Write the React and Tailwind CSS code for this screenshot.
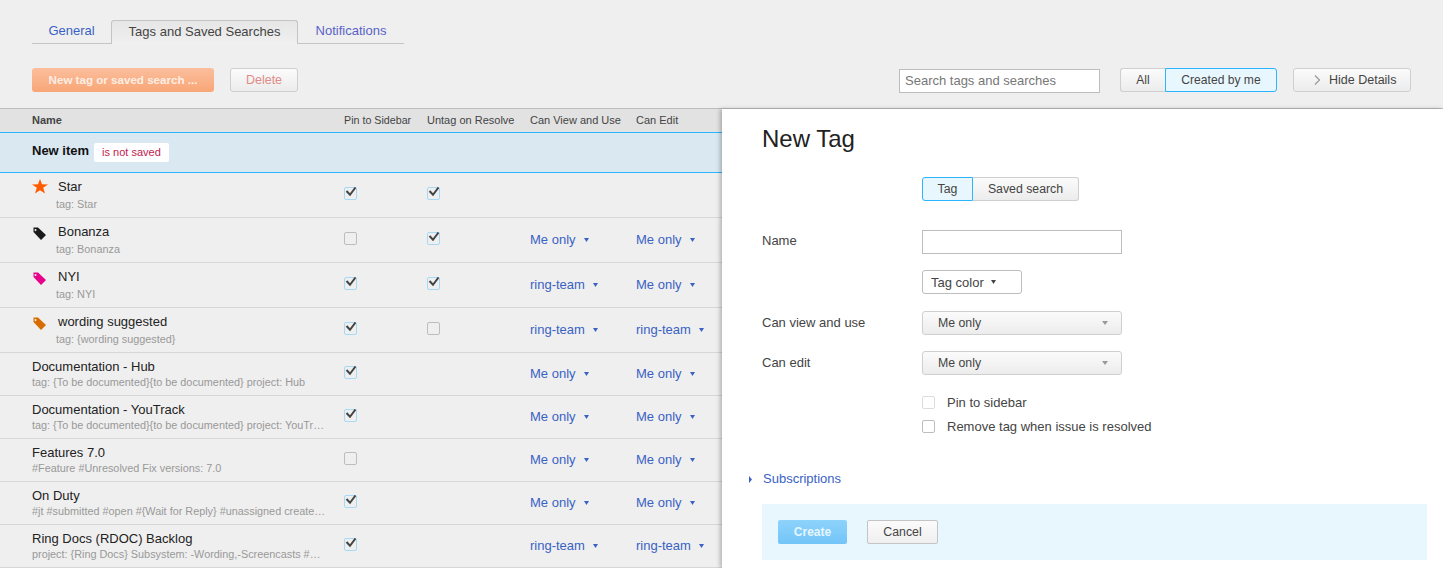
import React from "react";

const rows = [
  { name: "Star", sub: "tag: Star", icon: "star", pin: true, untag: true, tall: true },
  { name: "Bonanza", sub: "tag: Bonanza", icon: "#1a1a1a", pin: false, untag: true, view: "Me only", edit: "Me only", tall: true },
  { name: "NYI", sub: "tag: NYI", icon: "#e6008a", pin: true, untag: true, view: "ring-team", edit: "Me only", tall: true },
  { name: "wording suggested", sub: "tag: {wording suggested}", icon: "#d96c00", pin: true, untag: false, view: "ring-team", edit: "ring-team", tall: true },
  { name: "Documentation - Hub", sub: "tag: {To be documented}{to be documented} project: Hub", pin: true, view: "Me only", edit: "Me only" },
  { name: "Documentation - YouTrack", sub: "tag: {To be documented}{to be documented} project: YouTrack", pin: true, view: "Me only", edit: "Me only" },
  { name: "Features 7.0", sub: "#Feature #Unresolved Fix versions: 7.0", pin: false, view: "Me only", edit: "Me only" },
  { name: "On Duty", sub: "#jt #submitted #open #{Wait for Reply} #unassigned created: today", pin: true, view: "Me only", edit: "Me only" },
  { name: "Ring Docs (RDOC) Backlog", sub: "project: {Ring Docs} Subsystem: -Wording,-Screencasts #Unresolved", pin: true, view: "ring-team", edit: "ring-team" },
];

const btn = "flex items-center justify-center h-6 rounded-[3px] border border-[#cfcfcf] bg-linear-to-b from-[#fbfbfb] to-[#ececec] text-[#444]";
const activeBtn = "flex items-center justify-center h-6 border border-[#29b6ff] bg-[#e8f7fe] text-[#444]";

function Check({ checked, faded }) {
  const border = faded ? "border-[#ddd]" : checked ? "border-[#a5d9f5]" : "border-[#bdbdbd]";
  return (
    <span className={`relative block w-[13px] h-[13px] rounded-[2px] border ${border}`}>
      {checked && (
        <svg className="absolute left-[-1px] top-[-1px]" width="14" height="13" viewBox="0 0 14 13">
          <path d="M2.5 4 L6 7.8 L11.5 0.5" fill="none" stroke="#444" strokeWidth="2" />
        </svg>
      )}
    </span>
  );
}

function Caret({ color = "#3a62c4", wide }) {
  return (
    <svg width={wide ? 6 : 5} height="4" viewBox="0 0 5 4" preserveAspectRatio="none">
      <path d="M0 0 H5 L2.5 4 Z" fill={color} />
    </svg>
  );
}

function RowIcon({ icon }) {
  if (icon === "star") {
    return (
      <svg className="block" width="16" height="15" viewBox="0 0 16 15">
        <path d="M8 0 L10 5.2 L16 5.4 L11.2 8.8 L13 14.6 L8 11.2 L3 14.6 L4.8 8.8 L0 5.4 L6 5.2 Z" fill="#ff5c00" />
      </svg>
    );
  }
  return (
    <svg className="block ml-[1px]" width="13" height="13" viewBox="0 0 13 13">
      <path fillRule="evenodd" d="M0.5 0.5 H5 L13 8 L8 13 L0.5 5 Z M2.5 2 a1 1 0 1 0 0.01 0 Z" fill={icon} />
    </svg>
  );
}

function Access({ value }) {
  if (!value) return <span />;
  return (
    <span className="flex items-center gap-2 text-[13px] leading-[16px] text-[#3a62c4]">
      {value}
      <Caret />
    </span>
  );
}

function Row({ row }) {
  const cellTop = row.tall ? "pt-[14px]" : "pt-[13px]";
  return (
    <div className={`flex border-b border-[#d6d6d6] ${row.tall ? "h-[45px]" : "h-[43px]"}`}>
      <div className="w-[344px] shrink-0 pl-8 pr-4 flex">
        {row.icon && (
          <div className={`w-6 shrink-0 ${row.icon === "star" ? "pt-[6px]" : "pt-[9px]"}`}>
            <RowIcon icon={row.icon} />
          </div>
        )}
        <div className={`min-w-0 flex-1 ${row.tall ? "pt-[6px]" : "pt-[5px]"}`}>
          <div className={`text-[13px] leading-[16px] text-[#222] ${row.tall ? "ml-[2px]" : "mt-[1px]"}`}>{row.name}</div>
          <div className={`truncate text-[10.85px] leading-[13px] text-[#999] ${row.tall ? "mt-[3px]" : "mt-[1px]"}`}>{row.sub}</div>
        </div>
      </div>
      <div className={`w-[83px] shrink-0 ${cellTop}`}>
        <Check checked={row.pin} />
      </div>
      <div className={`w-[103px] shrink-0 ${cellTop}`}>
        {row.untag !== undefined && <Check checked={row.untag} />}
      </div>
      <div className={`w-[106px] shrink-0 ${cellTop}`}>
        <Access value={row.view} />
      </div>
      <div className={`flex-1 ${cellTop}`}>
        <Access value={row.edit} />
      </div>
    </div>
  );
}

function SelectBox({ label }) {
  return (
    <div className="w-[200px] h-6 flex items-center justify-between pl-[15px] pr-[13px] rounded-[3px] border border-[#cfcfcf] bg-linear-to-b from-[#fbfbfb] to-[#ececec] text-[12.3px] text-[#444]">
      {label}
      <Caret color="#999" wide />
    </div>
  );
}

export default function App() {
  return (
    <div className="w-[1443px] h-[568px] overflow-hidden flex flex-col bg-[#efefef] font-['Liberation_Sans',Arial,sans-serif]">
      <div className="ml-8 mt-5 flex h-6 text-[13px]">
        <div className="w-[79px] pb-[2px] flex items-center justify-center border-b border-[#c4c4c4] text-[#3a62c4]">General</div>
        <div className="w-[187px] pb-[1px] flex items-center justify-center rounded-t-[3px] border border-b-0 border-[#c4c4c4] bg-linear-to-b from-[#e6e6e6] to-[#f0f0f0] text-[#444]">
          Tags and Saved Searches
        </div>
        <div className="w-[106px] pb-[2px] flex items-center justify-center border-b border-[#c4c4c4] text-[#5a62c8]">Notifications</div>
      </div>

      <div className="mt-6 mb-4 h-6 px-8 flex">
        <div className="w-[182px] h-6 flex items-center justify-center rounded-[3px] bg-linear-to-b from-[#fbbe9c] to-[#f8a677] text-[11.6px] font-bold text-[#fdeee4]">
          New tag or saved search ...
        </div>
        <div className={`${btn} w-[68px] ml-4 text-[12.5px] !text-[#e08a8a]`}>Delete</div>
        <div className="ml-auto w-[201px] h-6 mt-[1px] flex items-center px-[5px] border border-[#bdbdbd] bg-white text-[13px] text-[#777]">
          Search tags and searches
        </div>
        <div className="ml-5 flex">
          <div className={`${btn} w-[45px] rounded-r-none border-r-0 text-[12px]`}>All</div>
          <div className={`${activeBtn} w-[112px] rounded-r-[3px] text-[12.1px]`}>Created by me</div>
        </div>
        <div className={`${btn} w-[118px] ml-4 !justify-start pl-5 gap-2 text-[12.5px]`}>
          <svg width="7" height="10" viewBox="0 0 7 10">
            <path d="M1 0.5 L5.5 5 L1 9.5" fill="none" stroke="#999" strokeWidth="1.2" />
          </svg>
          Hide Details
        </div>
      </div>

      <div className="flex flex-1 min-h-0 border-t border-[#bdbdbd]">
        <div className="w-[722px] shrink-0">
          <div className="flex h-[23px] items-center bg-[#e2e2e2] text-[11px] text-[#444]">
            <div className="w-[344px] pl-8 font-bold">Name</div>
            <div className="w-[83px] text-[10.7px]">Pin to Sidebar</div>
            <div className="w-[103px]">Untag on Resolve</div>
            <div className="w-[106px]">Can View and Use</div>
            <div>Can Edit</div>
          </div>
          <div className="h-[41px] flex items-center pl-8 border-y border-[#29b6ff] bg-[#dae8f2]">
            <span className="mb-[3px] text-[13px] font-bold text-[#111]">New item</span>
            <span className="ml-[5px] h-[19px] px-2 flex items-center rounded-[2px] bg-white text-[11px] text-[#c0224e]">is not saved</span>
          </div>
          {rows.map((row) => (
            <Row key={row.name} row={row} />
          ))}
        </div>

        <div className="flex-1 bg-white pl-10 pr-4 shadow-[-2px_0_4px_rgba(0,0,0,0.25)] text-[13px] text-[#444]">
          <h1 className="mt-[15px] h-[30px] leading-[30px] text-[24px] text-[#222]">New Tag</h1>
          <div className="mt-[23px] ml-[160px] flex">
            <div className={`${activeBtn} w-[51px] rounded-l-[3px] text-[12.3px]`}>Tag</div>
            <div className={`${btn} w-[106px] rounded-l-none border-l-0 text-[12.3px]`}>Saved search</div>
          </div>

          <div className="mt-[29px] flex">
            <div className="w-[160px] leading-[22px]">Name</div>
            <div className="w-[200px] h-6 border border-[#bdbdbd]" />
          </div>
          <div className="mt-4 ml-[160px] w-[100px] h-6 flex items-center gap-[7px] pl-2 rounded-[3px] border border-[#bdbdbd]">
            <span className="mt-[2px]">Tag color</span>
            <Caret color="#444" />
          </div>
          <div className="mt-[17px] flex">
            <div className="w-[160px] leading-[24px]">Can view and use</div>
            <SelectBox label="Me only" />
          </div>
          <div className="mt-4 flex">
            <div className="w-[160px] leading-[24px]">Can edit</div>
            <SelectBox label="Me only" />
          </div>

          <div className="mt-[20px] ml-[160px] flex items-center gap-3 h-[14px]">
            <Check faded />
            <span className="mt-[2px]">Pin to sidebar</span>
          </div>
          <div className="mt-[10px] ml-[160px] flex items-center gap-3 h-[14px]">
            <Check />
            <span className="mt-[2px]">Remove tag when issue is resolved</span>
          </div>

          <div className="mt-[38px] -ml-[13px] flex items-center gap-[11px] h-[16px] text-[#3a62c4]">
            <svg width="3" height="7" viewBox="0 0 3 7">
              <path d="M0 0 L3 3.5 L0 7 Z" fill="#3a62c4" />
            </svg>
            Subscriptions
          </div>

          <div className="mt-[17px] h-14 flex items-center pl-4 bg-[#e8f7fe]">
            <div className="w-[69px] h-6 flex items-center justify-center rounded-[2px] bg-linear-to-b from-[#8dd3fb] to-[#73c4f8] text-[12px] font-bold text-[#e6f6fe]">
              Create
            </div>
            <div className="ml-5 w-[71px] h-6 flex items-center justify-center rounded-[2px] border border-[#c4c4c4] bg-linear-to-b from-[#fbfbfb] to-[#efefef] text-[12.3px]">
              Cancel
            </div>
          </div>
        </div>
      </div>
    </div>
  );
}
